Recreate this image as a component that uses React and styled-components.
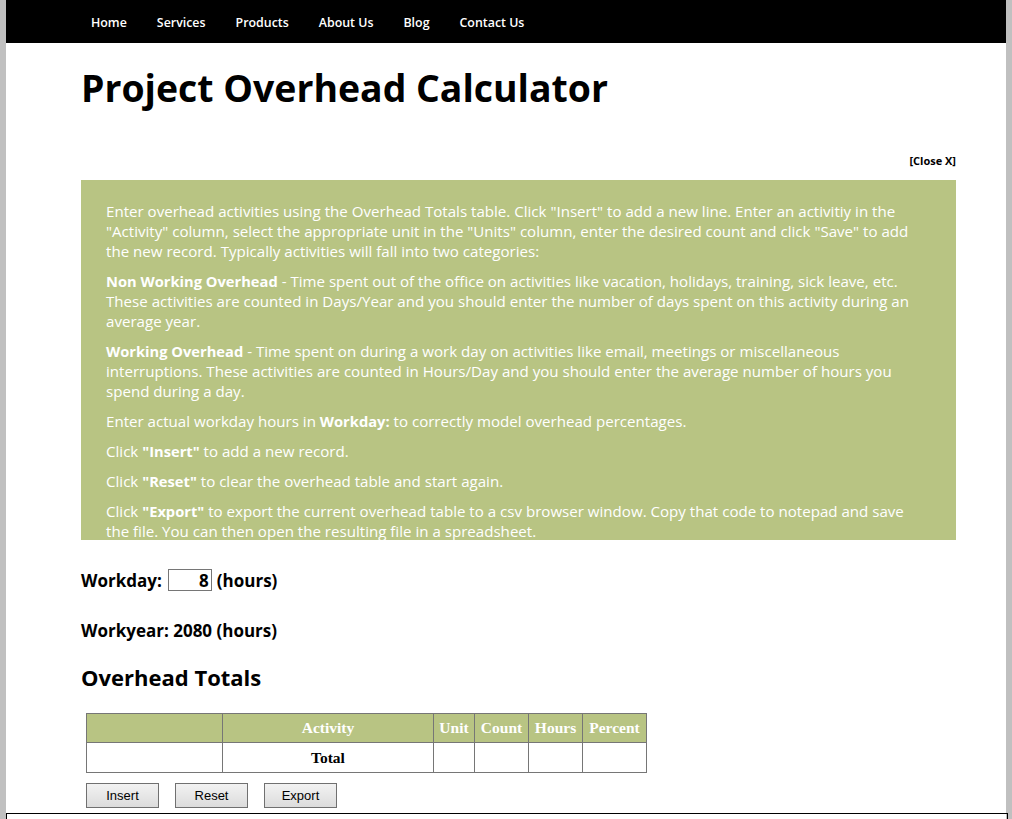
import React from "react";
import styled, { createGlobalStyle } from "styled-components";

const Global = createGlobalStyle`
  html, body { margin: 0; padding: 0; background: #c0c0c0; }
  body { font-family: "Open Sans", "Noto Sans", sans-serif; }
`;

const Page = styled.div`
  width: 1000px;
  margin: 0 0 0 6px;
  background: #fff;
  min-height: 819px;
  display: flex;
  flex-direction: column;
`;

const Nav = styled.nav`
  height: 43px;
  box-sizing: border-box;
  padding: 2px 0 0 70px;
  background: #000;
  display: flex;
  align-items: center;
`;

const NavLink = styled.a`
  color: #fff;
  font-weight: 600;
  font-size: 12.4px;
  padding: 0 15px;
  text-decoration: none;
`;

const Main = styled.main`
  padding: 0 50px 0 75px;
  display: flex;
  flex-direction: column;
  align-items: stretch;
`;

const Title = styled.h1`
  font-size: 37.4px;
  font-weight: 700;
  margin: 21px 0 0 0;
  line-height: 48px;
  color: #000;
`;

const CloseRow = styled.div`
  display: flex;
  justify-content: flex-end;
  margin-top: 38px;
  height: 20px;
  align-items: center;
`;

const CloseLink = styled.a`
  font-size: 11px;
  font-weight: 700;
  color: #000;
`;

const Help = styled.section`
  background: #b8c483;
  color: #fff;
  height: 360px;
  box-sizing: border-box;
  overflow: hidden;
  padding: 21px 32px 0 25px;
  margin-top: 10px;
`;

const HelpP = styled.p`
  margin: 0 0 10px 0;
  font-size: 15.1px;
  line-height: 20px;
`;

const Strong = styled.strong`
  font-weight: 700;
  font-size: 14.7px;
`;

const Field = styled.div`
  font-size: 17px;
  font-weight: 700;
  display: flex;
  align-items: center;
  gap: 5px;
  margin-top: ${(p) => p.$top}px;
  height: 26px;
`;

const NumInput = styled.input`
  width: 38px;
  height: 20px;
  border: 1px solid #767676;
  text-align: right;
  font: inherit;
  font-size: 17px;
  padding: 0 2px;
  margin: 0 0 0 1px;
  color: #000;
`;

const H2 = styled.h2`
  font-size: 22px;
  font-weight: 700;
  margin: 19px 0 0 0;
  line-height: 30px;
`;

const Table = styled.table`
  align-self: flex-start;
  border-collapse: collapse;
  table-layout: fixed;
  width: 561px;
  margin: 21px 0 0 5px;
  font-family: "Liberation Serif", "Times New Roman", serif;
  font-size: 15.5px;
`;

const Th = styled.th`
  background: #b8c483;
  color: #fff;
  border: 1px solid #767676;
  height: 28px;
  padding: 0;
  font-weight: 700;
  white-space: nowrap;
`;

const Td = styled.td`
  border: 1px solid #767676;
  height: 29px;
  text-align: center;
  font-weight: 700;
  padding: 0;
`;

const Buttons = styled.div`
  display: flex;
  gap: 16px;
  margin: 10px 0 0 5px;
`;

const Button = styled.button`
  width: 73px;
  height: 25px;
  font-family: "Liberation Sans", Arial, sans-serif;
  font-size: 13px;
  color: #000;
  border: 1px solid #707070;
  border-radius: 0;
  background: linear-gradient(#f2f2f2, #dcdcdc);
  padding: 0;
`;

const Footer = styled.footer`
  margin-top: 5px;
  border: 1px solid #000;
  width: 1002px;
  height: 20px;
  box-sizing: border-box;
`;

export default function App() {
  const links = ["Home", "Services", "Products", "About Us", "Blog", "Contact Us"];
  const widths = [136, 211, 41, 54, 54, 64];
  return (
    <>
      <Global />
      <Page>
        <Nav>
          {links.map((l) => (
            <NavLink key={l} href="#">{l}</NavLink>
          ))}
        </Nav>
        <Main>
          <Title>Project Overhead Calculator</Title>
          <CloseRow>
            <CloseLink>[Close X]</CloseLink>
          </CloseRow>
          <Help>
            <HelpP>
              Enter overhead activities using the Overhead Totals table. Click "Insert" to add a new line. Enter an activitiy in the "Activity" column, select the appropriate unit in the "Units" column, enter the desired count and click "Save" to add the new record. Typically activities will fall into two categories:
            </HelpP>
            <HelpP>
              <Strong>Non Working Overhead</Strong> - Time spent out of the office on activities like vacation, holidays, training, sick leave, etc. These activities are counted in Days/Year and you should enter the number of days spent on this activity during an average year.
            </HelpP>
            <HelpP>
              <Strong>Working Overhead</Strong> - Time spent on during a work day on activities like email, meetings or miscellaneous interruptions. These activities are counted in Hours/Day and you should enter the average number of hours you spend during a day.
            </HelpP>
            <HelpP>
              Enter actual workday hours in <Strong>Workday:</Strong> to correctly model overhead percentages.
            </HelpP>
            <HelpP>
              Click <Strong>"Insert"</Strong> to add a new record.
            </HelpP>
            <HelpP>
              Click <Strong>"Reset"</Strong> to clear the overhead table and start again.
            </HelpP>
            <HelpP>
              Click <Strong>"Export"</Strong> to export the current overhead table to a csv browser window. Copy that code to notepad and save the file. You can then open the resulting file in a spreadsheet.
            </HelpP>
          </Help>
          <Field $top={27}>
            Workday: <NumInput defaultValue="8" /> (hours)
          </Field>
          <Field $top={24}>Workyear: 2080 (hours)</Field>
          <H2>Overhead Totals</H2>
          <Table>
            <colgroup>
              {widths.map((w, i) => (
                <col key={i} style={{ width: w }} />
              ))}
            </colgroup>
            <thead>
              <tr>
                <Th></Th>
                <Th>Activity</Th>
                <Th>Unit</Th>
                <Th>Count</Th>
                <Th>Hours</Th>
                <Th>Percent</Th>
              </tr>
            </thead>
            <tbody>
              <tr>
                <Td></Td>
                <Td>Total</Td>
                <Td></Td>
                <Td></Td>
                <Td></Td>
                <Td></Td>
              </tr>
            </tbody>
          </Table>
          <Buttons>
            <Button>Insert</Button>
            <Button>Reset</Button>
            <Button>Export</Button>
          </Buttons>
        </Main>
        <Footer />
      </Page>
    </>
  );
}
